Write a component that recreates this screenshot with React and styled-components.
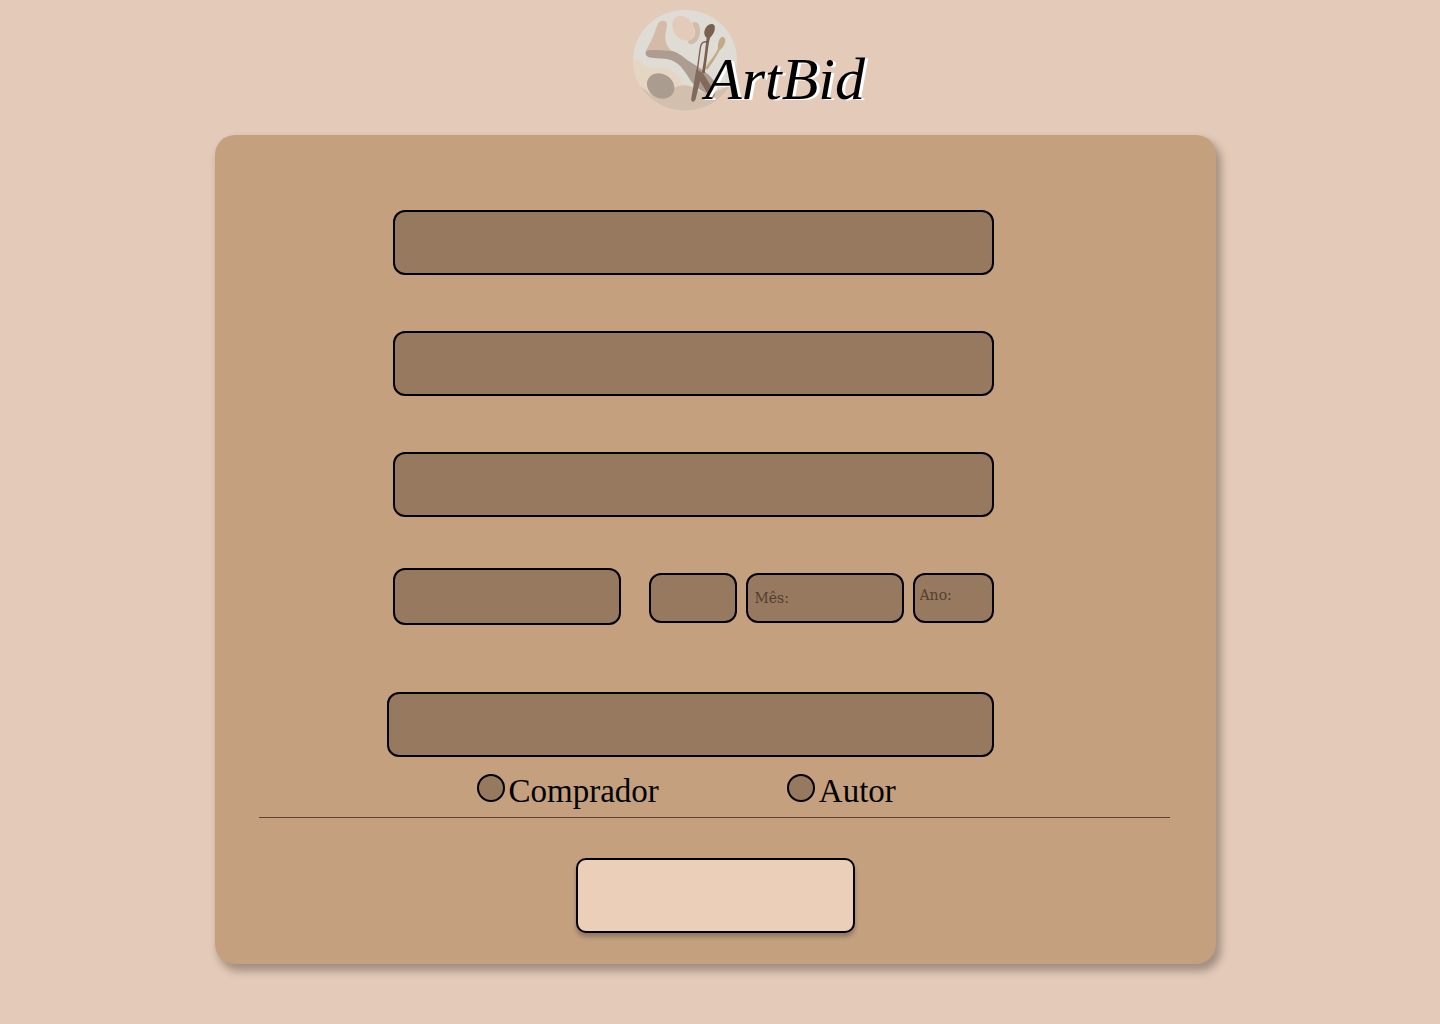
import React from "react";
import styled, { createGlobalStyle } from "styled-components";

const GlobalStyle = createGlobalStyle`
  *, *::before, *::after { box-sizing: border-box; }
  body { margin: 0; background: #e4cbb9; color: #000; }
`;

const Page = styled.div`
  display: flex;
  flex-direction: column;
  align-items: center;
  min-height: 100vh;
  padding: 10px 10px 60px 0;
`;

const Header = styled.header`
  display: flex;
  align-items: flex-start;
  height: 125px;
  padding-left: 68px;
`;

const Emblem = styled.svg`
  width: 104px;
  height: 101px;
  flex: none;
`;

const Wordmark = styled.h1`
  margin: 33px 0 0 -32px;
  font: italic 400 60px/72px "Liberation Serif", serif;
  text-shadow: 3px 1px 0 #fff;
  z-index: 1;
`;

const Card = styled.form`
  width: 100%;
  max-width: 1001px;
  padding: 75px 44px 31px;
  border-radius: 20px;
  background: #c4a07f;
  box-shadow: 4px 6px 8px 1px rgba(0, 0, 0, 0.3);
`;

const Fields = styled.div`
  display: flex;
  flex-direction: column;
  padding: 0 178px 0 134px;
`;

const Field = styled.input`
  display: block;
  width: 100%;
  min-width: 0;
  height: ${({ $height = 65 }) => $height}px;
  padding: 0 7px;
  border: 2px solid #000;
  border-radius: 12px;
  background: #96795f;
  color: #000;
  font: 400 14px/20px "DejaVu Serif", serif;

  &::placeholder { color: #533f30; opacity: 1; }
`;

const Stack = styled.div`
  display: flex;
  flex-direction: column;
  gap: 56px;
`;

const DetailRow = styled.div`
  display: grid;
  grid-template-columns: 228fr 345fr;
  gap: 28px;
  margin: 51px 0 67px;
`;

const BirthDate = styled.div`
  display: grid;
  grid-template-columns: 88fr 158fr 81fr;
  gap: 9px;
  padding-top: 5px;

  ${Field}:last-child { padding: 0 5px 6px; }
`;

const WideField = styled.div`
  margin-left: -6px;
`;

const Roles = styled.div`
  display: flex;
  gap: 128px;
  padding: 17px 0 0 84px;
  height: 60px;
`;

const Role = styled.label`
  display: flex;
  align-items: flex-start;
  gap: 4px;
  font: 400 33px/34px "Liberation Serif", serif;
`;

const Radio = styled.input`
  appearance: none;
  flex: none;
  width: 28px;
  height: 28px;
  margin: 0;
  border: 2px solid #000;
  border-radius: 50%;
  background: #96795f;

  &:checked { box-shadow: inset 0 0 0 5px #96795f; background: #000; }
`;

const Divider = styled.hr`
  margin: 0 2px 40px 0;
  border: 0;
  border-top: 1px solid #5f432d;
`;

const Submit = styled.button`
  display: block;
  width: 279px;
  height: 75px;
  margin: 0 auto;
  border: 2px solid #000;
  border-radius: 10px;
  background: #ebcfb8;
  box-shadow: 0 4px 4px rgba(0, 0, 0, 0.25);
`;

function Palette() {
  return (
    <Emblem viewBox="42 30 312 303" aria-hidden="true">
      <defs>
        <clipPath id="disc"><ellipse cx="198" cy="181" rx="156" ry="151" /></clipPath>
      </defs>
      <g clipPath="url(#disc)">
        <rect x="42" y="30" width="312" height="303" fill="#dfdcd5" />
        <path d="M42 174C66 182 76 204 98 204C132 202 151 207 171 222C193 240 187 266 218 276L205 340H42Z" fill="#e5d6c4" />
        <path d="M42 252C60 252 74 266 92 280C120 298 151 286 165 264C190 250 216 256 234 270C266 288 296 272 354 248V340H42Z" fill="#d3bfae" />
        <path d="M81 151C99 120 106 101 114 77C119 62 129 60 140 64C147 69 142 90 139 106C137 130 148 144 162 158L132 170L82 164Z" fill="#d4bba7" />
        <path d="M81 154C92 146 125 153 151 152C174 153 188 168 208 182C241 203 270 219 287 245L282 290C257 277 232 266 215 242C199 218 187 193 158 181C130 171 96 179 84 169C79 164 79 159 81 154Z" fill="#ad9d90" />
        <ellipse cx="125" cy="258" rx="43" ry="36" transform="rotate(32 125 258)" fill="#aa9c8e" />
        <ellipse cx="193" cy="85" rx="30" ry="40" transform="rotate(-34 193 85)" fill="#e4cbb9" />
        <path d="M221 68C233 62 242 72 243 89C244 112 234 130 217 133C207 133 204 124 211 121C225 117 230 105 228 91C227 81 219 75 221 68Z" fill="#d2bba8" />
      </g>
      <path d="M302 117C308 107 319 110 319 121C318 135 309 146 302 151C292 171 281 188 265 209L258 205C271 184 290 164 297 145C296 134 298 124 302 117Z" fill="#c3aa85" />
      <path d="M260 84C267 72 282 68 287 78C290 92 281 106 273 113C266 140 264 182 257 220L248 220C256 182 259 143 263 113C254 106 254 95 260 84Z" fill="#79604f" />
      <path d="M265 126C247 121 244 137 242 158L235 210" fill="none" stroke="#79604f" strokeWidth="4" strokeLinecap="round" />
      <path d="M232 207L246 216L255 224L286 275C290 289 280 298 270 288L243 243L230 297C226 309 214 307 217 294Z" fill="#806a5c" />
    </Emblem>
  );
}

export default function App() {
  return (
    <>
      <GlobalStyle />
      <Page>
        <Header>
          <Palette />
          <Wordmark>ArtBid</Wordmark>
        </Header>
        <Card onSubmit={(e) => e.preventDefault()}>
          <Fields>
            <Stack>
              <Field type="text" aria-label="Nome" />
              <Field type="email" aria-label="E-mail" />
              <Field type="password" aria-label="Senha" />
            </Stack>
            <DetailRow>
              <Field type="text" aria-label="CPF" $height={57} />
              <BirthDate>
                <Field type="text" aria-label="Dia" $height={50} />
                <Field type="text" aria-label="Mês" placeholder="Mês:" $height={50} />
                <Field type="text" aria-label="Ano" placeholder="Ano:" $height={50} />
              </BirthDate>
            </DetailRow>
            <WideField>
              <Field type="text" aria-label="Endereço" />
            </WideField>
            <Roles role="radiogroup">
              <Role><Radio type="radio" name="role" value="comprador" />Comprador</Role>
              <Role><Radio type="radio" name="role" value="autor" />Autor</Role>
            </Roles>
          </Fields>
          <Divider />
          <Submit type="submit" aria-label="Cadastrar" />
        </Card>
      </Page>
    </>
  );
}
